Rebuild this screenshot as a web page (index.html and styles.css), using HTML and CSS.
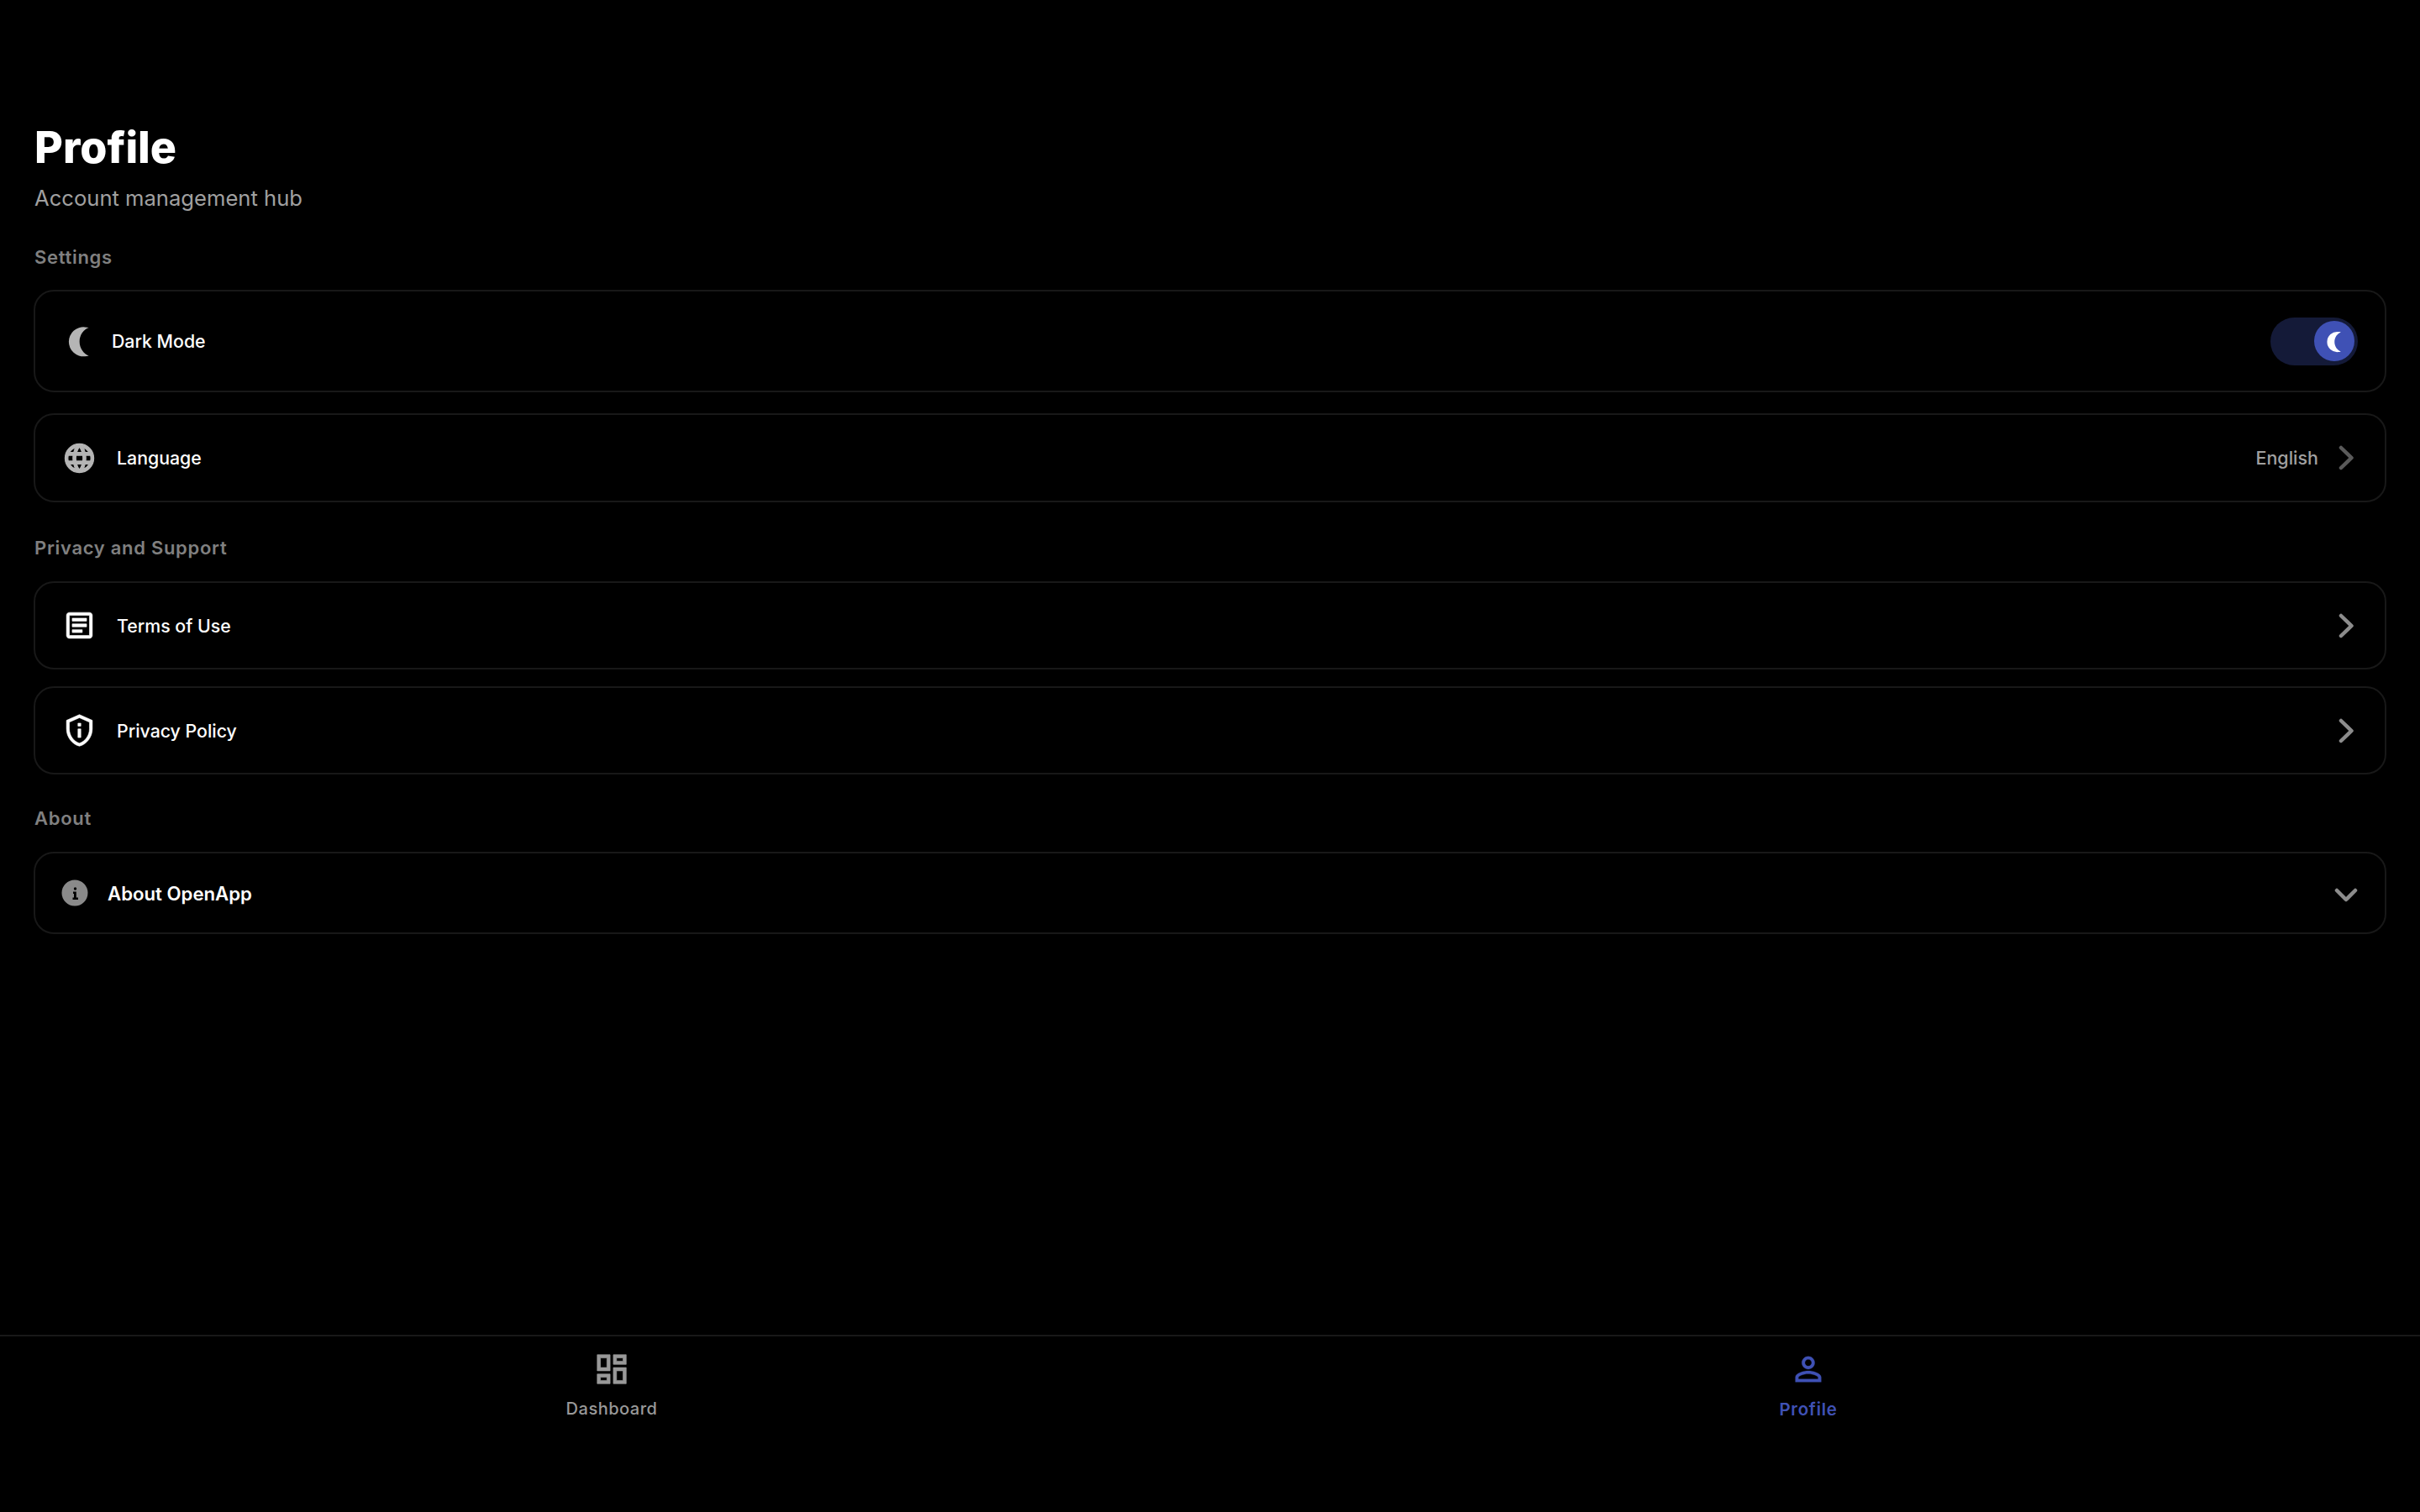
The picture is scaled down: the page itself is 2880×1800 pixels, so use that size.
FILE: index.html
```html
<!DOCTYPE html>
<html lang="en">
<head>
  <meta charset="UTF-8">
  <meta name="viewport" content="width=device-width, initial-scale=1.0">
  <title>Profile</title>
  <link rel="stylesheet" href="styles.css">
</head>
<body>
  <div class="page">
    <main class="content">
      <h1 class="title">Profile</h1>
      <p class="subtitle">Account management hub</p>

      <h2 class="section">Settings</h2>
      <div class="row row-theme">
        <svg class="icon-moon" viewBox="0 0 24 24"><path d="M15.5 2.5a10 10 0 1 0 0 19.9c.9 0 1.8-.1 2.6-.4-3.6-1.300-6.300-5.300-6.300-9.600s2.700-8.300 6.300-9.500c-.8-.3-1.700-.4-2.600-.4z"/></svg>
        <span class="label label-theme">Dark Mode</span>
        <div class="toggle">
          <div class="thumb">
            <svg class="thumb-moon" viewBox="0 0 24 24"><path d="M15.5 2.5a10 10 0 1 0 0 19.9c.9 0 1.8-.1 2.6-.4-3.6-1.300-6.300-5.300-6.300-9.600s2.700-8.300 6.300-9.500c-.8-.3-1.700-.4-2.600-.4z"/></svg>
          </div>
        </div>
      </div>
      <div class="row row-language">
        <svg class="icon icon-gray" viewBox="0 0 24 24"><path d="M11.99 2C6.47 2 2 6.48 2 12s4.47 10 9.99 10C17.52 22 22 17.52 22 12S17.52 2 11.99 2zm6.93 6h-2.95c-.32-1.25-.78-2.45-1.38-3.56 1.84.63 3.37 1.91 4.33 3.56zM12 4.04c.83 1.2 1.48 2.53 1.91 3.96h-3.82c.43-1.43 1.08-2.76 1.91-3.96zM4.26 14C4.1 13.36 4 12.69 4 12s.1-1.36.26-2h3.38c-.08.66-.14 1.32-.14 2s.06 1.34.14 2H4.26zm.82 2h2.95c.32 1.25.78 2.45 1.38 3.56-1.84-.63-3.37-1.9-4.33-3.56zm2.95-8H5.08c.96-1.66 2.49-2.93 4.33-3.56C8.81 5.55 8.35 6.75 8.03 8zM12 19.96c-.83-1.2-1.48-2.53-1.91-3.96h3.82c-.43 1.43-1.08 2.76-1.91 3.96zM14.34 14H9.66c-.09-.66-.16-1.32-.16-2s.07-1.35.16-2h4.68c.09.65.16 1.32.16 2s-.07 1.34-.16 2zm.25 5.56c.6-1.11 1.06-2.31 1.38-3.56h2.95c-.96 1.65-2.49 2.93-4.33 3.56zM16.36 14c.08-.66.14-1.32.14-2s-.06-1.34-.14-2h3.38c.16.64.26 1.31.26 2s-.1 1.36-.26 2h-3.38z"/></svg>
        <span class="label">Language</span>
        <span class="value">English</span>
        <svg class="chevron chevron-dim" viewBox="0 0 40 40"><path d="M14 8l12.500 12-12.500 12"/></svg>
      </div>

      <h2 class="section section-privacy">Privacy and Support</h2>
      <div class="row row-link">
        <svg class="icon" viewBox="0 0 24 24"><path d="M19 5v14H5V5h14m0-2H5c-1.1 0-2 .9-2 2v14c0 1.1.9 2 2 2h14c1.1 0 2-.9 2-2V5c0-1.1-.9-2-2-2z"/><path d="M14 17H7v-2h7v2zm3-4H7v-2h10v2zm0-4H7V7h10v2z"/></svg>
        <span class="label">Terms of Use</span>
        <svg class="chevron" viewBox="0 0 40 40"><path d="M14 8l12.500 12-12.500 12"/></svg>
      </div>
      <div class="row row-link">
        <svg class="icon" viewBox="0 0 24 24"><path d="M12 3.19l7 3.11V11c0 4.52-2.98 8.69-7 9.93-4.02-1.24-7-5.41-7-9.93V6.3l7-3.11M12 1L3 5v6c0 5.55 3.84 10.74 9 12 5.16-1.26 9-6.45 9-12V5l-9-4zm-1 6h2v2h-2V7zm0 4h2v6h-2v-6z"/></svg>
        <span class="label">Privacy Policy</span>
        <svg class="chevron" viewBox="0 0 40 40"><path d="M14 8l12.500 12-12.500 12"/></svg>
      </div>

      <h2 class="section section-about">About</h2>
      <div class="row row-about">
        <svg class="icon-info" viewBox="0 0 32 32"><circle cx="16" cy="16" r="15.500" fill="#8a8a8a"/><circle cx="16.500" cy="11" r="1.700" fill="#000"/><path d="M14 14.500h3.800v7H20V24h-6.500v-2.500h1.500v-4.500h-1z" fill="#000"/></svg>
        <span class="label label-about">About OpenApp</span>
        <svg class="chevron-down" viewBox="0 0 40 40"><path d="M9 17l11 11 11-11"/></svg>
      </div>
    </main>

    <nav class="tabs">
      <div class="tab">
        <svg class="tab-icon" viewBox="0 0 24 24"><path d="M19 5v2h-4V5h4M9 5v6H5V5h4m10 8v6h-4v-6h4M9 17v2H5v-2h4M21 3h-8v6h8V3zM11 3H3v10h8V3zm10 8h-8v10h8V11zm-10 4H3v6h8v-6z"/></svg>
        <span class="tab-label">Dashboard</span>
      </div>
      <div class="tab tab-active">
        <svg class="tab-icon" viewBox="0 0 24 24"><path d="M12 5.900c1.160 0 2.100.94 2.100 2.100s-.94 2.100-2.100 2.100S9.900 9.160 9.900 8s.94-2.100 2.100-2.100m0 9c2.970 0 6.100 1.460 6.100 2.100v1.100H5.900V17c0-.64 3.130-2.100 6.100-2.100M12 4C9.790 4 8 5.790 8 8s1.790 4 4 4 4-1.790 4-4-1.790-4-4-4zm0 9c-2.670 0-8 1.340-8 4v3h16v-3c0-2.660-5.330-4-8-4z"/></svg>
        <span class="tab-label">Profile</span>
      </div>
    </nav>
  </div>
</body>
</html>
```

FILE: styles.css
```css
body, html {
  height: 100%;
  margin: 0;
  background-color: #000;
  font-family: 'Inter', sans-serif;
}
.page {
  height: 100vh;
  display: flex;
  flex-direction: column;
}
.content {
  flex: 1;
  padding: 146px 40px 0;
}
.title {
  margin: 0;
  padding-left: 1px;
  color: #fff;
  font-size: 52px;
  line-height: 60px;
  font-weight: 800;
}
.subtitle {
  margin: 14px 0 0;
  padding-left: 1px;
  color: #a0a0a0;
  font-size: 25.600px;
  line-height: 32px;
}
.section {
  margin: 40px 0 25px;
  padding-left: 1px;
  color: #808080;
  font-size: 22px;
  line-height: 28px;
  font-weight: 600;
  letter-spacing: 0.700px;
}
.section-privacy {
  margin-bottom: 26px;
}
.section-about {
  margin: 38px 0 26px;
}
.row {
  display: flex;
  align-items: center;
  box-sizing: border-box;
  border: 2px solid #181818;
  border-radius: 24px;
  padding: 0 32px;
}
.row-theme {
  height: 122px;
  margin-bottom: 25px;
}
.row-language {
  height: 106px;
}
.row-link {
  height: 105px;
  margin-bottom: 20px;
}
.row-link:last-of-type {
  margin-bottom: 0;
}
.row-about {
  height: 98px;
}
.label {
  color: #fff;
  font-size: 21.300px;
  font-weight: 500;
  margin-left: 24px;
}
.label-theme {
  margin-left: 17px;
}
.label-about {
  margin-left: 23px;
  font-size: 22.200px;
  font-weight: 600;
}
.icon {
  width: 41px;
  height: 41px;
  fill: #fff;
  stroke: #fff;
  stroke-width: 0.350px;
  flex-shrink: 0;
}
.icon-gray {
  fill: #b5b5b5;
  stroke: #b5b5b5;
  stroke-width: 0.700px;
}
.icon-moon {
  width: 42px;
  height: 42px;
  fill: #b5b5b5;
  flex-shrink: 0;
}
.icon-info {
  width: 32px;
  height: 32px;
  margin-left: -1px;
  flex-shrink: 0;
}
.toggle {
  margin-left: auto;
  width: 104px;
  height: 57px;
  border-radius: 29px;
  background-color: #141a38;
  display: flex;
  align-items: center;
  justify-content: flex-end;
  padding-right: 4px;
  box-sizing: border-box;
}
.thumb {
  width: 48px;
  height: 48px;
  border-radius: 50%;
  background-color: #3f51b5;
  display: flex;
  align-items: center;
  justify-content: center;
}
.thumb-moon {
  width: 29px;
  height: 29px;
  fill: #fff;
}
.value {
  margin-left: auto;
  color: #a0a0a0;
  font-size: 21.500px;
  font-weight: 500;
}
.chevron {
  width: 40px;
  height: 40px;
  margin-left: auto;
  margin-right: -6px;
  fill: none;
  stroke: #8c8c8c;
  stroke-width: 4.500px;
  stroke-linecap: round;
  stroke-linejoin: round;
  flex-shrink: 0;
}
.value + .chevron {
  margin-left: 13px;
}
.chevron-dim {
  stroke: #5a5a5a;
}
.chevron-down {
  width: 40px;
  height: 40px;
  margin-left: auto;
  margin-right: -6px;
  fill: none;
  stroke: #8c8c8c;
  stroke-width: 4.500px;
  stroke-linecap: round;
  stroke-linejoin: round;
}
.tabs {
  box-sizing: border-box;
  height: 211px;
  border-top: 2px solid #181818;
  padding: 16px 16px 0;
  display: flex;
  justify-content: space-around;
}
.tab {
  display: flex;
  flex-direction: column;
  align-items: center;
  width: 200px;
  color: #999;
}
.tab-icon {
  width: 46px;
  height: 46px;
  fill: #999;
  stroke: #999;
  stroke-width: 0.350px;
}
.tab-label {
  margin-top: 12px;
  font-size: 20px;
  font-weight: 500;
  letter-spacing: 0.500px;
}
.tab-active {
  color: #3f51b5;
}
.tab-active .tab-icon {
  fill: #3f51b5;
  stroke: #3f51b5;
  stroke-width: 0.150px;
}
.tab-active .tab-label {
  font-size: 20.500px;
  font-weight: 600;
  letter-spacing: 0.700px;
}
```
